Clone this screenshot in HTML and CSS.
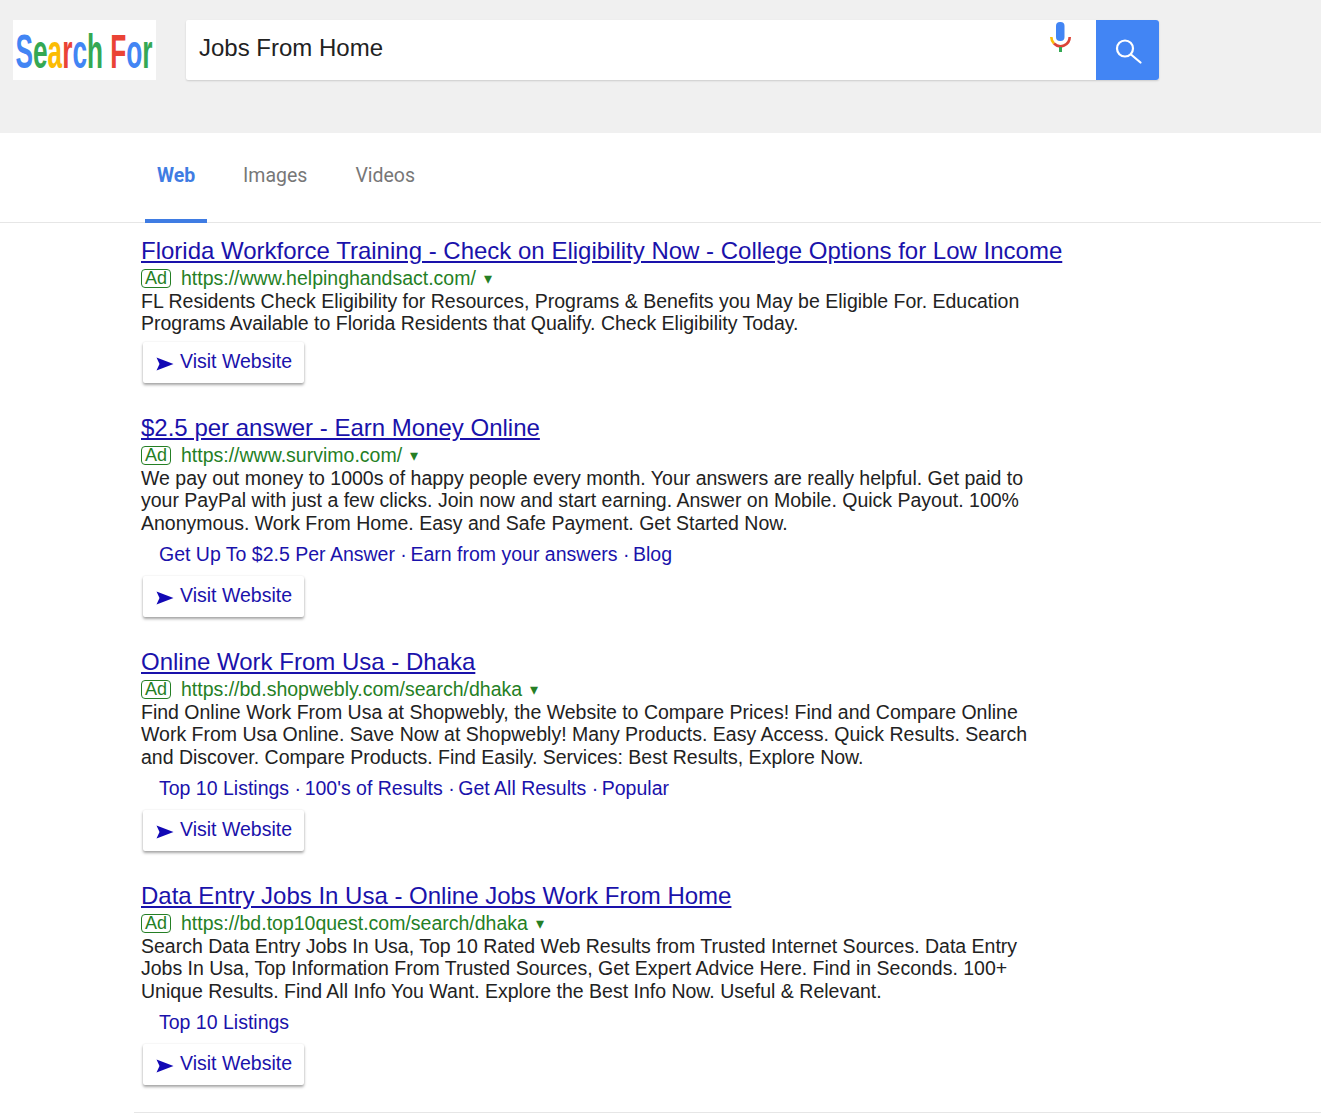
FILE: index.html
```html
<!DOCTYPE html>
<html lang="en">
<head>
<meta charset="utf-8">
<title>Search For</title>
<link rel="stylesheet" href="styles.css">
</head>
<body>
<header class="top">
  <div class="logo"><div class="logo-text"><span class="b">S</span><span class="g">e</span><span class="y">a</span><span class="r">r</span><span class="b">c</span><span class="g">h</span> <span class="r">F</span><span class="b">o</span><span class="g">r</span></div></div>
  <div class="search">
    <div class="query">Jobs From Home</div>
    <svg class="mic" width="24" height="32" viewBox="0 0 24 32">
      <rect x="8" y="0" width="8.500" height="19" rx="4" fill="#4285f4"/>
      <path d="M3.300 15A9.200 9.200 0 0 0 6 21.500" fill="none" stroke="#fbbc05" stroke-width="2.600"/>
      <path d="M6 21.500A9.200 9.200 0 0 0 21.700 15" fill="none" stroke="#db4437" stroke-width="2.600"/>
      <rect x="11" y="25" width="3" height="5" fill="#34a853"/>
    </svg>
    <button class="go" type="button" aria-label="Search">
      <svg width="28" height="28" viewBox="0 0 28 28" fill="none" stroke="#fff" stroke-width="2.200">
        <circle cx="11" cy="10.500" r="8"/>
        <path d="M17 16.500l9.500 8" stroke-linecap="round"/>
      </svg>
    </button>
  </div>
</header>
<nav class="tabs">
  <a class="tab active">Web</a>
  <a class="tab">Images</a>
  <a class="tab">Videos</a>
</nav>
<main class="results">
  <article class="ad">
    <a class="title">Florida Workforce Training - Check on Eligibility Now - College Options for Low Income</a>
    <div class="url"><span class="badge">Ad</span><span class="link">https://www.helpinghandsact.com/</span><span class="caret">▾</span></div>
    <p class="desc">FL Residents Check Eligibility for Resources, Programs &amp; Benefits you May be Eligible For. Education<br>Programs Available to Florida Residents that Qualify. Check Eligibility Today.</p>
    <a class="visit"><svg class="arrow" width="18" height="14" viewBox="0 0 18 14"><path d="M0.500 0.500L17.500 7 0.500 13.500 3.500 7z"/></svg>Visit Website</a>
  </article>
  <article class="ad">
    <a class="title">$2.5 per answer - Earn Money Online</a>
    <div class="url"><span class="badge">Ad</span><span class="link">https://www.survimo.com/</span><span class="caret">▾</span></div>
    <p class="desc">We pay out money to 1000s of happy people every month. Your answers are really helpful. Get paid to<br>your PayPal with just a few clicks. Join now and start earning. Answer on Mobile. Quick Payout. 100%<br>Anonymous. Work From Home. Easy and Safe Payment. Get Started Now.</p>
    <div class="sitelinks"><a>Get Up To $2.5 Per Answer</a> · <a>Earn from your answers</a> · <a>Blog</a></div>
    <a class="visit"><svg class="arrow" width="18" height="14" viewBox="0 0 18 14"><path d="M0.500 0.500L17.500 7 0.500 13.500 3.500 7z"/></svg>Visit Website</a>
  </article>
  <article class="ad">
    <a class="title">Online Work From Usa - Dhaka</a>
    <div class="url"><span class="badge">Ad</span><span class="link">https://bd.shopwebly.com/search/dhaka</span><span class="caret">▾</span></div>
    <p class="desc">Find Online Work From Usa at Shopwebly, the Website to Compare Prices! Find and Compare Online<br>Work From Usa Online. Save Now at Shopwebly! Many Products. Easy Access. Quick Results. Search<br>and Discover. Compare Products. Find Easily. Services: Best Results, Explore Now.</p>
    <div class="sitelinks"><a>Top 10 Listings</a> · <a>100's of Results</a> · <a>Get All Results</a> · <a>Popular</a></div>
    <a class="visit"><svg class="arrow" width="18" height="14" viewBox="0 0 18 14"><path d="M0.500 0.500L17.500 7 0.500 13.500 3.500 7z"/></svg>Visit Website</a>
  </article>
  <article class="ad">
    <a class="title">Data Entry Jobs In Usa - Online Jobs Work From Home</a>
    <div class="url"><span class="badge">Ad</span><span class="link">https://bd.top10quest.com/search/dhaka</span><span class="caret">▾</span></div>
    <p class="desc">Search Data Entry Jobs In Usa, Top 10 Rated Web Results from Trusted Internet Sources. Data Entry<br>Jobs In Usa, Top Information From Trusted Sources, Get Expert Advice Here. Find in Seconds. 100+<br>Unique Results. Find All Info You Want. Explore the Best Info Now. Useful &amp; Relevant.</p>
    <div class="sitelinks"><a>Top 10 Listings</a></div>
    <a class="visit"><svg class="arrow" width="18" height="14" viewBox="0 0 18 14"><path d="M0.500 0.500L17.500 7 0.500 13.500 3.500 7z"/></svg>Visit Website</a>
  </article>
</main>
<div class="rule"></div>
</body>
</html>
```

FILE: styles.css
```css
* { box-sizing: border-box; }
html, body { margin: 0; padding: 0; }
body { background: #fff; font-family: "Liberation Sans", Arial, sans-serif; color: #222; height: 1117px; overflow: hidden; }
a { cursor: pointer; }

.top { height: 133px; background: #f0f0f0; display: flex; align-items: flex-start; padding: 20px 0 0 13px; }
.logo { width: 143px; height: 60px; padding-top: 2px; background: #fff; display: flex; align-items: center; justify-content: center; overflow: hidden; }
.logo-text { flex-shrink: 0; font-size: 49px; line-height: 58px; font-weight: 700; white-space: nowrap; transform: scaleX(0.535); transform-origin: center; }
.b { color: #4285f4; }
.g { color: #34a853; }
.y { color: #fbbc05; }
.r { color: #ea4335; }

.search { margin-left: 30px; width: 973px; height: 60px; background: #fff; border-radius: 2px; box-shadow: 0 1px 2px rgba(0,0,0,.15); display: flex; align-items: flex-start; }
.query { flex: 1; padding: 13px 0 0 13px; font-size: 24px; line-height: 30px; color: #222; }
.mic { margin: 2px 24px 0 0; }
.go { width: 63px; height: 60px; background: #4285f4; border: 0; padding: 3px 0 0; border-radius: 0 3px 3px 0; display: flex; align-items: center; justify-content: center; }

.tabs { height: 90px; border-bottom: 1px solid #e6e6e6; display: flex; padding-left: 145px; }
.tab { height: 89px; padding: 30px 12px 0; margin-right: 24px; font-family: Roboto, "Liberation Sans", sans-serif; font-size: 19.5px; line-height: 26px; color: #777; }
.tab.active { width: 62px; color: #3f7ce3; font-weight: 700; border-bottom: 4px solid #3f7ce3; margin-bottom: -1px; height: 90px; white-space: nowrap; }

.results { padding: 13px 0 0 141px; }
.ad { margin-bottom: 30px; }
.title { display: block; font-size: 24px; line-height: 30px; color: #1a12ab; text-decoration: underline; white-space: nowrap; }
.url { display: flex; align-items: center; height: 24px; font-size: 19.5px; color: #257f25; }
.badge { width: 30px; height: 19px; border: 1px solid #257f25; border-radius: 4px; font-size: 18px; line-height: 17px; text-align: center; margin-right: 10px; }
.caret { font-size: 16px; margin-left: 8px; }
.desc { margin: -0.25px 0 0; padding-bottom: 0.25px; font-size: 19.5px; line-height: 22.5px; color: #222; white-space: nowrap; }
.sitelinks { margin: 7.5px 0 0 18px; height: 27px; font-size: 19.5px; line-height: 24px; color: #1a12ab; white-space: nowrap; }
.sitelinks a { color: #1a12ab; }
.sitelinks a + a { margin-left: -1.8px; }
.visit { display: flex; align-items: center; width: 161px; height: 41px; margin: 7px 0 0 2px; padding: 0 0 2px 13px; background: #fff; border-radius: 2px; box-shadow: 0 2px 3px rgba(0,0,0,.35), 0 0 2px rgba(0,0,0,.08); font-size: 19.5px; color: #1a12ab; }
.arrow { margin-right: 6px; margin-top: 4px; fill: #1208b5; }

.rule { position: absolute; left: 134px; top: 1112px; width: 1187px; height: 1px; background: #e6e6e6; }
```
